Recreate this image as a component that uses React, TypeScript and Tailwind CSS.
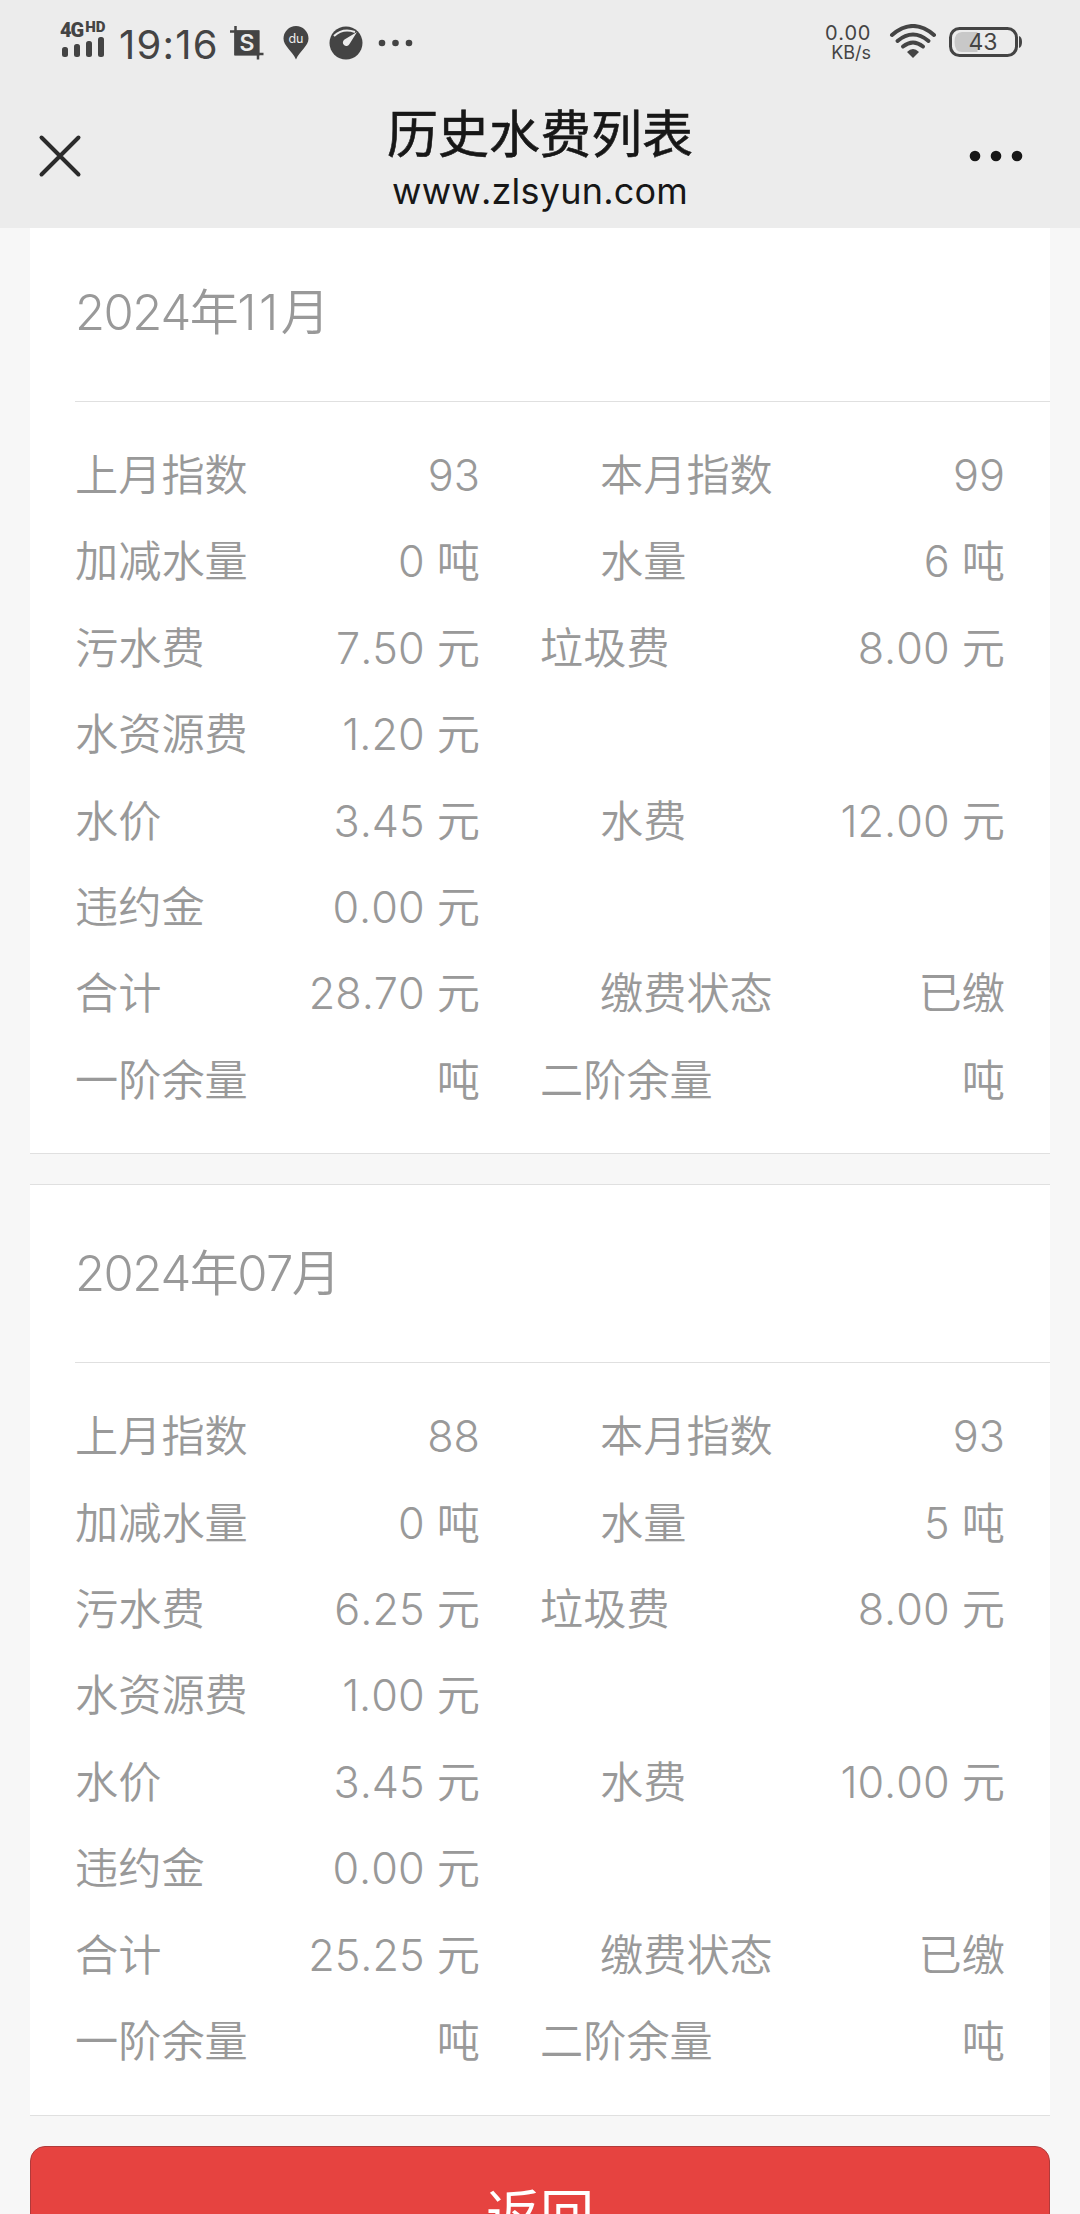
import React from 'react';

interface Item {
  label: string;
  value: string;
  indent?: boolean;
}

interface Bill {
  year: string;
  month: string;
  monthClass: string;
  rows: Item[][];
}

const bills: Bill[] = [
  {
    year: '2024',
    month: '11',
    // narrow digits need a bit more room
    monthClass: 'tracking-[2.4px]',
    rows: [
      [{ label: '上月指数', value: '93' }, { label: '本月指数', value: '99', indent: true }],
      [{ label: '加减水量', value: '0 吨' }, { label: '水量', value: '6 吨', indent: true }],
      [{ label: '污水费', value: '7.50 元' }, { label: '垃圾费', value: '8.00 元' }],
      [{ label: '水资源费', value: '1.20 元' }],
      [{ label: '水价', value: '3.45 元' }, { label: '水费', value: '12.00 元', indent: true }],
      [{ label: '违约金', value: '0.00 元' }],
      [{ label: '合计', value: '28.70 元' }, { label: '缴费状态', value: '已缴', indent: true }],
      [{ label: '一阶余量', value: '吨' }, { label: '二阶余量', value: '吨' }],
    ],
  },
  {
    year: '2024',
    month: '07',
    monthClass: '',
    rows: [
      [{ label: '上月指数', value: '88' }, { label: '本月指数', value: '93', indent: true }],
      [{ label: '加减水量', value: '0 吨' }, { label: '水量', value: '5 吨', indent: true }],
      [{ label: '污水费', value: '6.25 元' }, { label: '垃圾费', value: '8.00 元' }],
      [{ label: '水资源费', value: '1.00 元' }],
      [{ label: '水价', value: '3.45 元' }, { label: '水费', value: '10.00 元', indent: true }],
      [{ label: '违约金', value: '0.00 元' }],
      [{ label: '合计', value: '25.25 元' }, { label: '缴费状态', value: '已缴', indent: true }],
      [{ label: '一阶余量', value: '吨' }, { label: '二阶余量', value: '吨' }],
    ],
  },
];

const StatusBar: React.FC = () => (
  <div className="flex h-[86px] items-start justify-between pl-[60px] pr-[57px] text-[#444]">
    <div className="flex items-start">
      <div className="mt-[20px] w-[47px]">
        <div className="flex h-[17px] items-start gap-[2px] font-[Roboto,sans-serif] font-black leading-none">
          <span className="text-[20px] leading-[20px] tracking-[-1px]">4G</span>
          <span className="text-[15px] leading-[15px]">HD</span>
        </div>
        <svg width="47" height="21" viewBox="0 0 47 21" fill="currentColor">
          <rect x="2" y="10" width="6" height="10" rx="2.5" />
          <rect x="14" y="7" width="6" height="13" rx="2.5" />
          <rect x="26" y="4" width="6" height="16" rx="2.5" />
          <rect x="38" y="0" width="6" height="20" rx="2.5" />
        </svg>
      </div>
      <span className="ml-[12px] mt-[25px] w-[99px] whitespace-nowrap text-[40px] leading-[40px] tracking-[1.2px]">19:16</span>
      <svg className="ml-[12px] mt-[26px]" width="34" height="34" viewBox="0 0 34 34">
        <path d="M5.500 0v28h28M0 5.500h28v28" fill="none" stroke="currentColor" strokeWidth="2.500" />
        <rect x="4.500" y="4.500" width="25" height="25" fill="currentColor" />
        <text x="17" y="25" textAnchor="middle" fontSize="23" fontWeight="600" fill="#ececec">S</text>
      </svg>
      <svg className="ml-[19px] mt-[26px]" width="26" height="34" viewBox="0 0 26 34">
        <path d="M13 0a12.500 12.500 0 0 1 12.500 12.500C25.500 20 17 24.500 13 33.500 9 24.500.5 20 .5 12.500A12.500 12.500 0 0 1 13 0Z" fill="currentColor" />
        <text x="13" y="17" textAnchor="middle" fontSize="12.500" fill="#ececec">du</text>
      </svg>
      <svg className="ml-[20px] mt-[26px]" width="34" height="34" viewBox="0 0 34 34">
        <circle cx="17" cy="17" r="16.500" fill="currentColor" />
        <path d="M5 10Q14 1.500 26 6" fill="none" stroke="#ececec" strokeWidth="2" />
        <path d="M28 6 20.500 18a3.500 3.500 0 1 1-5-4.500Z" fill="#ececec" />
      </svg>
      <svg className="ml-[15px] mt-[39px]" width="36" height="8" viewBox="0 0 36 8" fill="currentColor">
        <circle cx="4" cy="4" r="3.300" />
        <circle cx="17.500" cy="4" r="3.300" />
        <circle cx="31" cy="4" r="3.300" />
      </svg>
    </div>
    <div className="flex items-start">
      <div className="mt-[23px] text-right leading-none">
        <div className="text-[20px] leading-[20px] tracking-[0.6px]">0.00</div>
        <div className="text-[18px] leading-[20px]">KB/s</div>
      </div>
      <svg className="ml-[18px] mt-[24px]" width="48" height="36" viewBox="0 0 48 36" fill="none" stroke="currentColor" strokeWidth="4" strokeLinecap="round">
        <path d="M3 11Q24-7 45 11" />
        <path d="M8.500 17Q24 4 39.500 17" />
        <path d="M14 22.500Q24 14.500 34 22.500" />
        <path d="M18 28Q24 22 30 28L24 34Z" fill="currentColor" stroke="none" />
      </svg>
      <svg className="ml-[12px] mt-[26px]" width="74" height="32" viewBox="0 0 74 32">
        <path d="M13 6H28.500V26H13Q5.500 26 5.500 16T13 6Z" fill="#c8c8c8" />
        <rect x="1.500" y="2.500" width="66" height="27" rx="9" fill="none" stroke="currentColor" strokeWidth="3" />
        <path d="M70 10q3 1 3 6t-3 6Z" fill="currentColor" />
        <text x="34" y="24" textAnchor="middle" fontSize="23" fill="currentColor">43</text>
      </svg>
    </div>
  </div>
);

const NavBar: React.FC = () => (
  <div className="flex h-[142px] items-start justify-between px-[38px] text-[#171717]">
    <svg className="mr-[32px] mt-[48px]" width="44" height="44" viewBox="0 0 44 44" stroke="#2b2b2b" strokeWidth="4" strokeLinecap="round">
      <path d="M3.500 3.500 40.500 40.500M40.500 3.500 3.500 40.500" />
    </svg>
    <div className="flex flex-col items-center">
      <h1 className="mt-[21px] text-[51px] font-normal leading-[56px] [-webkit-text-stroke:0.6px_#171717]">历史水费列表</h1>
      <p className="mt-[8px] text-[36px] leading-[40px] tracking-[0.2px]">www.zlsyun.com</p>
    </div>
    <svg className="mt-[64px]" width="76" height="12" viewBox="0 0 76 12" fill="currentColor">
      <circle cx="9" cy="6" r="5.300" />
      <circle cx="30" cy="6" r="5.300" />
      <circle cx="51" cy="6" r="5.300" />
    </svg>
  </div>
);

const Field: React.FC<{ item: Item }> = ({ item }) => (
  <div className={`flex justify-between ${item.indent ? 'pl-[60px]' : ''}`}>
    <span>{item.label}</span>
    <span>{item.value}</span>
  </div>
);

const BillCard: React.FC<{ bill: Bill }> = ({ bill }) => (
  <section className="mb-[30px] border-y border-[#e0e0e0] bg-white pl-[45px] text-[#999]">
    <h2 className="h-[178px] border-b border-[#e0e0e0] text-[49px] font-[350] leading-[178px] tracking-[-1.6px]">
      {bill.year}年<span className={bill.monthClass}>{bill.month}</span>月
    </h2>
    <div className="py-[30px] pr-[45px] text-[43.2px] leading-[86.4px]">
      {bill.rows.map((row) => (
        <div key={row[0].label} className="grid grid-cols-[405px_465px] gap-x-[60px]">
          {row.map((item) => (
            <Field key={item.label} item={item} />
          ))}
        </div>
      ))}
    </div>
  </section>
);

export default function App() {
  return (
    <div className="h-[2214px] w-[1080px] overflow-hidden bg-[#f7f7f7] font-[Inter,'Noto_Sans_CJK_SC',sans-serif] [font-kerning:none]">
      <header className="relative z-10 h-[228px] bg-[#ececec]">
        <StatusBar />
        <NavBar />
      </header>
      <main className="mt-[-5px] px-[30px] font-[350]">
        {bills.map((bill) => (
          <BillCard key={`${bill.year}-${bill.month}`} bill={bill} />
        ))}
        <button className="h-[140px] w-full rounded-[15px] border border-[#b03a3a] bg-[#e64340] text-[54px] font-normal text-white">
          返回
        </button>
      </main>
    </div>
  );
}
